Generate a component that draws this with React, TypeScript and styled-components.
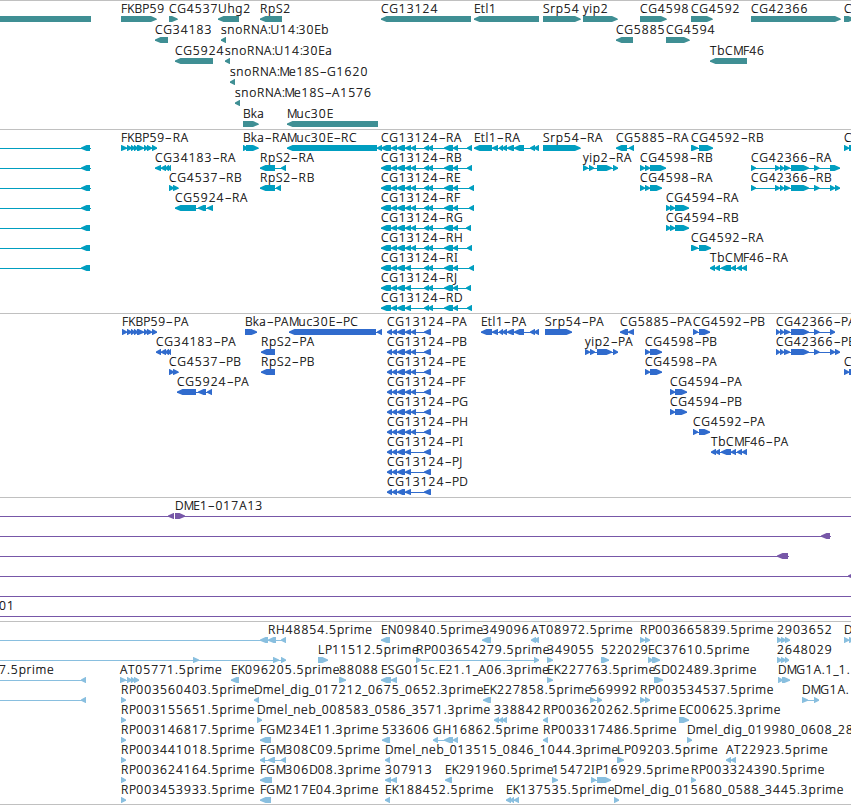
import styled, { createGlobalStyle } from "styled-components"

const GlobalStyle = createGlobalStyle`
   body {
      margin: 0;
      background: #fff;
   }
`

const Browser = styled.main`
   width: 851px;
   height: 805px;
   overflow: hidden;
   background: #fff;
   display: flex;
   flex-direction: column;
`

const Track = styled.section<{ $height: number }>`
   box-sizing: border-box;
   flex: none;
   height: ${({ $height }) => $height}px;
   border-top: 1px solid #c0c0c0;
`

const Row = styled.div<{ $height: number }>`
   position: relative;
   height: ${({ $height }) => $height}px;
`

// placed on the genome axis, one unit is one pixel
const FeatureBox = styled.div<{ $x: number }>`
   position: absolute;
   top: 0;
   left: ${({ $x }) => $x}px;
`

const Label = styled.span`
   display: block;
   height: 15px;
   font-family: "Noto Sans", sans-serif;
   font-size: 12px;
   font-weight: 300;
   line-height: 15px;
   font-kerning: none;
   white-space: pre;
   color: #000;
   -webkit-text-stroke: 0.2px #000;
`

const Run = styled.span<{ $spacing: number }>`
   letter-spacing: ${({ $spacing }) => $spacing}px;
`

const Dash = styled.span`
   display: inline-block;
   width: 7.4px;
   transform: scaleX(1.7);
   transform-origin: 0 50%;
`

const Glyph = styled.svg`
   display: block;
   height: 6px;
   overflow: visible;
`

type Span = [number, number]
type Feature = {
   name: string
   dir: "<" | ">"
   exons: Span[]
   line?: Span
   labelX?: number
}

const spans = (text: string): Span[] =>
   text ? text.split(" ").map((s) => s.split("-").map(Number) as Span) : []

const f = (name: string, dir: "<" | ">", exons: string, line?: Span, labelX?: number): Feature => ({
   name, dir, exons: spans(exons), line, labelX,
})

const genes: Feature[][] = [
   [
      f("", "<", "0-91", [0, 91]),
      f("FKBP59", ">", "121-156.5"),
      f("CG4537", ">", "169-177.5"),
      f("Uhg2", "<", "218-239"),
      f("RpS2", "<", "260-282"),
      f("CG13124", "<", "381-471"),
      f("Etl1", "<", "474-539"),
      f("Srp54", ">", "543-580.5"),
      f("yip2", ">", "583-617.5"),
      f("CG4598", ">", "640-666.5"),
      f("CG4592", ">", "691-712.5"),
      f("CG42366", ">", "751-840.5"),
      f("C", ">", "844-854"),
   ],
   [
      f("CG34183", "<", "155-168"),
      f("snoRNA:U14:30Eb", "<", "221-226"),
      f("CG5885", "<", "616-633"),
      f("CG4594", ">", "666-689.5"),
   ],
   [
      f("CG5924", "<", "175-213"),
      f("snoRNA:U14:30Ea", "<", "225-230"),
      f("TbCMF46", "<", "710-747"),
   ],
   [f("snoRNA:Me18S-G1620", "<", "230-235")],
   [f("snoRNA:Me18S-A1576", "<", "235-240")],
   [f("Bka", ">", "243-258.5"), f("Muc30E", "<", "287-378")],
]

const upstream = (end: number) => f("", "<", "81-90", [0, end])

const cg13124R = (iso: string, end: number, short = false) =>
   f(`CG13124-R${iso}`, "<",
      `381-391 391-397 397-405 405-411${short ? "" : " 411-416"} 424-429 428-433 444-453 453-458 ${end - 5}-${end}`)

const cg13124P = (iso: string, short = false) =>
   f(`CG13124-P${iso}`, "<", `387-392 392-397 397-405 405-411${short ? "" : " 411-416"} 424-431`)

const etlTail = "492-498 499-503 502-507 507-514 514-524 530-535 534-539"
const cg42366 = "775-780 780-784 784-790 791-809 814-819.5"

const transcripts: Feature[][] = [
   [
      upstream(91),
      f("FKBP59-RA", ">", "121-127 127-132 131-135 134-138 137-144 144-148 147-152 152-157"),
      f("Bka-RA", ">", "243-248 246-258.5"),
      f("Muc30E-RC", "<", "287-377 377-382"),
      cg13124R("A", 472),
      f("Etl1-RA", "<", `474-492 ${etlTail}`),
      f("Srp54-RA", ">", "543-580.5"),
      f("CG5885-RA", "<", "616-627 629-634"),
      f("CG4592-RB", ">", "691-698 699-713"),
      f("C", ">", "844-849 849-859"),
   ],
   [
      upstream(91),
      f("CG34183-RA", "<", "155-161 161-166 165-169 168-171"),
      f("RpS2-RA", "<", "260-275 281-286"),
      cg13124R("B", 472),
      f("yip2-RA", ">", "583-588 589-594 597-612 613-618"),
      f("CG4598-RB", ">", "640-645 645-650 650-666"),
      f("CG42366-RA", ">", `751-756 ${cg42366} 830-840`),
   ],
   [
      upstream(91),
      f("CG4537-RB", ">", "169-174 173-178.5"),
      f("RpS2-RB", "<", "260-275 276-281"),
      cg13124R("E", 474),
      f("CG4598-RA", ">", "640-645 645-650 650-662"),
      f("CG42366-RB", ">", `751-756 ${cg42366} 830-835 835-840`),
   ],
   [
      upstream(91),
      f("CG5924-RA", "<", "175-196 198-206 207-213"),
      cg13124R("F", 474),
      f("CG4594-RA", ">", "666-671 670-675 675-689"),
   ],
   [upstream(90), cg13124R("G", 471), f("CG4594-RB", ">", "666-671 670-675 675-689")],
   [upstream(90), cg13124R("H", 472), f("CG4592-RA", ">", "691-698 699-711")],
   [
      upstream(90),
      cg13124R("I", 474, true),
      f("TbCMF46-RA", "<", "710-715 715-720 721-731 731-736 737-742 742-747"),
   ],
   [cg13124R("J", 471, true)],
   [cg13124R("D", 472, true)],
]

const proteins: Feature[][] = [
   [
      f("FKBP59-PA", ">", "122-127 127-132 131-135 134-138 137-144 144-148 147-152 152-157"),
      f("Bka-PA", ">", "245-257"),
      f("Muc30E-PC", "<", "289-376 377-382"),
      cg13124P("A"),
      f("Etl1-PA", "<", `481-492 ${etlTail}`),
      f("Srp54-PA", ">", "545-572"),
      f("CG5885-PA", "<", "620-628 628-634"),
      f("CG4592-PB", ">", "693-698 699-710"),
      f("CG42366-PA", ">", `${cg42366.replace("775", "776")} 830-835`),
   ],
   [
      f("CG34183-PA", "<", "156-161 161-166 165-169 168-171"),
      f("RpS2-PA", "<", "261-275"),
      cg13124P("B"),
      f("yip2-PA", ">", "585-590 590-595 597-612 613-618"),
      f("CG4598-PB", ">", "645-650 650-662"),
      f("CG42366-PB", ">", `${cg42366.replace("775", "776")} 830-835 835-840`),
   ],
   [
      f("CG4537-PB", ">", "169-174 173-178.5"),
      f("RpS2-PB", "<", "261-275"),
      cg13124P("E"),
      f("CG4598-PA", ">", "645-650 650-662"),
      f("C", ">", "844-849 849-859"),
   ],
   [
      f("CG5924-PA", "<", "177-196 198-206 207-212"),
      cg13124P("F"),
      f("CG4594-PA", ">", "670-675 675-687"),
   ],
   [cg13124P("G"), f("CG4594-PB", ">", "670-675 675-687")],
   [cg13124P("H"), f("CG4592-PA", ">", "693-698 699-710")],
   [
      cg13124P("I", true),
      f("TbCMF46-PA", "<", "711-716 715-720 721-731 731-736 737-742 742-747"),
   ],
   [cg13124P("J", true)],
   [cg13124P("D", true)],
]

const clones: Feature[][] = [
   [f("", "<", "168-174", [0, 174]), f("DME1-017A13", ">", "175-185", [175, 860])],
   [f("", "<", "821-830", [0, 831])],
   [f("", "<", "777-788", [0, 789])],
   [f("", "<", "848-858", [0, 858])],
   [f("", "<", "", [0, 860])],
   [f("01", "<", "", [0, 860], -1)],
]

const ests: Feature[][] = [
   [
      f("RH48854.5prime", "<", "260-268 268-276 281-286", [0, 286], 268),
      f("EN09840.5prime", "<", "381-390"),
      f("349096", "<", "482-491"),
      f("AT08972.5prime", "<", "531-536 534-539"),
      f("RP003665839.5prime", ">", "640-645 645-650"),
      f("2903652", ">", "777-782 781-786 785-790"),
      f("D", ">", "844-849 849-854"),
   ],
   [
      f("", ">", "193-199 273-279 281-286", [0, 286]),
      f("LP11512.5prime", ">", "318-328"),
      f("RP003654279.5prime", ">", "416-421 534-539"),
      f("349055", ">", "547-553"),
      f("522029", ">", "601-609"),
      f("EC37610.5prime", ">", "648-653 652-660"),
      f("2648029", ">", "777-782 781-786 785-789"),
   ],
   [
      f("7.5prime", "<", "81-86", [0, 86], -1),
      f("AT05771.5prime", ">", "120-126 127-132 131-135 134-139"),
      f("EK096205.5prime", "<", "231-239"),
      f("88088", ">", "339-346"),
      f("ESG015c.E21.1_A06.3prime", "<", "381-391 391-397"),
      f("EK227763.5prime", ">", "547-553"),
      f("SD02489.3prime", ">", "654-663"),
      f("DMG1A.1_1.", ">", "778-783 782-790"),
   ],
   [
      f("", "<", "81-86", [0, 86]),
      f("RP003560403.5prime", ">", "121-126"),
      f("Dmel_dig_017212_0675_0652.3prime", "<", "254-259"),
      f("EK227858.5prime", "<", "483-491"),
      f("569992", ">", "590-595 597-602"),
      f("RP003534537.5prime", ">", "640-645 645-650"),
      f("DMG1A.", ">", "802-808 814-819"),
   ],
   [
      f("RP003155651.5prime", ">", "121-126"),
      f("Dmel_neb_008583_0586_3571.3prime", ">", "257-262"),
      f("338842", "<", "494-499 499-503 502-507"),
      f("RP003620262.5prime", "<", "543-548"),
      f("EC00625.3prime", ">", "679-689"),
   ],
   [
      f("RP003146817.5prime", ">", "121-126"),
      f("FGM234E11.3prime", "<", "260-271"),
      f("533606", "<", "382-390"),
      f("GH16862.5prime", "<", "433-438 444-453 453-458"),
      f("RP003317486.5prime", "<", "543-548"),
      f("Dmel_dig_019980_0608_28", ">", "687-692"),
   ],
   [
      f("RP003441018.5prime", ">", "121-126"),
      f("FGM308C09.5prime", "<", "260-265 268-275 281-286"),
      f("Dmel_neb_013515_0846_1044.3prime", "<", "385-390"),
      f("LP09203.5prime", ">", "617-624"),
      f("AT22923.5prime", "<", "726-731 731-736"),
   ],
   [
      f("RP003624164.5prime", ">", "121-126"),
      f("FGM306D08.3prime", "<", "260-272"),
      f("307913", "<", "385-391 391-397"),
      f("EK291960.5prime", "<", "445-452"),
      f("15472", ">", "552-558"),
      f("IP16929.5prime", ">", "591-596 597-611"),
      f("RP003324390.5prime", ">", "691-696"),
   ],
   [
      f("RP003453933.5prime", ">", "121-126"),
      f("FGM217E04.3prime", "<", "260-271"),
      f("EK188452.5prime", "<", "385-390"),
      f("EK137535.5prime", "<", "506-511 510-514 514-519"),
      f("Dmel_dig_015680_0588_3445.3prime", ">", "614-619"),
   ],
]

const tracks = [
   { id: "genes", color: "#3f8f94", height: 129, rowHeight: 21, rows: genes },
   { id: "transcripts", color: "#009ec0", height: 184, rowHeight: 20, rows: transcripts },
   { id: "proteins", color: "#306bcd", height: 184, rowHeight: 20, rows: proteins },
   { id: "clones", color: "#7757a8", height: 124, rowHeight: 20, rows: clones },
   { id: "ests", color: "#89bfdf", height: 183, rowHeight: 20, rows: ests },
]

const spacingOf = (run: string) => {
   if (/\d/.test(run)) return 1.1
   if (/[a-z]/.test(run)) return 0.7
   if (run === "M") return -0.9
   if (/[FKBPEND]/.test(run)) return 0.15
   if (run === ":") return -0.4
   if (run === "_") return 0.3
   return 0.8
}

const LabelText = ({ text }: { text: string }) => (
   <Label>
      {text.match(/\d+|[a-z]+|M|[FKBPEND]+|[-:_]|[^\da-zMFKBPEND:_-]+/g)?.map((run, i) =>
         run === "-" ? <Dash key={i}>-</Dash> : <Run key={i} $spacing={spacingOf(run)}>{run}</Run>
      )}
   </Label>
)

// an exon is a 6px bar that tapers to a blunt tip on the strand side
const exonPoints = ([start, end]: Span, dir: "<" | ">") => {
   const tip = Math.min(5.5, end - start - 0.5)
   if (start <= 0) return `0,0 ${end},0 ${end},6 0,6`
   return dir === "<"
      ? `${end},0 ${start + tip},0 ${start},2.4 ${start},3.8 ${start + tip},6 ${end},6`
      : `${start},0 ${end - tip},0 ${end},2.4 ${end},3.8 ${end - tip},6 ${start},6`
}

const FeatureItem = ({ feature, color }: { feature: Feature; color: string }) => {
   const { name, dir, exons, line } = feature
   const start = line ? line[0] : exons[0][0]
   const end = line ? line[1] : exons[exons.length - 1][1]
   const labelX = feature.labelX ?? (name && exons.length ? exons[0][0] : start)
   // the 7.5prime read starts left of the view, its label stays at the edge
   return (
      <>
         {name && (
            <FeatureBox $x={labelX}>
               <LabelText text={name} />
            </FeatureBox>
         )}
         <FeatureBox $x={start}>
            <Label />
            <Glyph width={end - start} viewBox={`${start} 0 ${end - start} 6`} fill={color}>
               <rect x={start} y={3} width={end - start} height={1} />
               {exons.map((exon, i) => (
                  <polygon key={i} points={exonPoints(exon, dir)} />
               ))}
            </Glyph>
         </FeatureBox>
      </>
   )
}

const App = () => {
   return (
      <>
         <GlobalStyle />
         <Browser>
            {tracks.map((track) => (
               <Track key={track.id} $height={track.height}>
                  {track.rows.map((row, i) => (
                     <Row key={i} $height={track.rowHeight}>
                        {row.map((feature, j) => (
                           <FeatureItem key={j} feature={feature} color={track.color} />
                        ))}
                     </Row>
                  ))}
               </Track>
            ))}
            <Track $height={1} />
         </Browser>
      </>
   )
}

export default App
